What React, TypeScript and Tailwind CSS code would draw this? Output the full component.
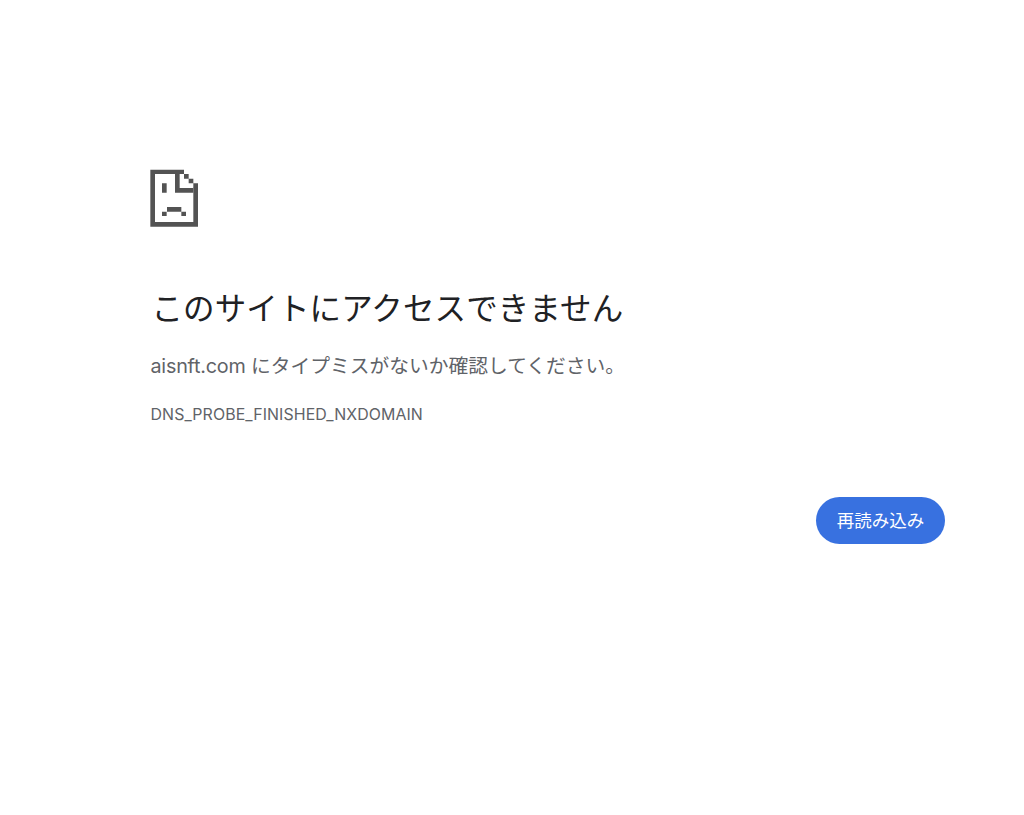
function SadPageIcon() {
    return (
        <svg className="block h-[58px] w-12" viewBox="0 0 144 174" fill="#535353" aria-hidden="true">
            <path d="M1 2h101v13H15v144h115V56h14v117H1z" />
            <path d="M75 14h14v43h41v14H75z" />
            <path d="M102 15h14v14h-14zM116 29h14v14h-14zM130 43h14v14h-14z" />
            <path d="M36 43h14v28H36zM51 114h43v14H51zM36 128h14v13H36zM94 128h14v13H94z" />
        </svg>
    );
}

export default function App() {
    return (
        <div className="min-h-[815px] bg-white pt-[169px] pr-[79px] pl-[150px] font-['Inter','Noto_Sans_CJK_JP',sans-serif] text-[#5f6368]">
            <SadPageIcon />
            <main className="mt-[61px] pl-[0.5px]">
                <h1 className="pl-px text-[31.5px] leading-[42px] tracking-[0.12px] text-[#202124]">このサイトにアクセスできません</h1>
                <p className="mt-[21px] text-[19.75px] leading-[30px]">
                    <span className="tracking-[-0.22px]">aisnft.com</span> にタイプミスがないか確認してください。
                </p>
                <div className="mt-[22px] text-[15.9px] leading-6 tracking-[0.1px]">DNS_PROBE_FINISHED_NXDOMAIN</div>
            </main>
            <div className="mt-[70px] flex justify-end">
                <button className="h-[47px] w-[129px] rounded-full bg-[#3871e0] pt-px text-[17.5px] text-white">
                    再読み込み
                </button>
            </div>
        </div>
    );
}
